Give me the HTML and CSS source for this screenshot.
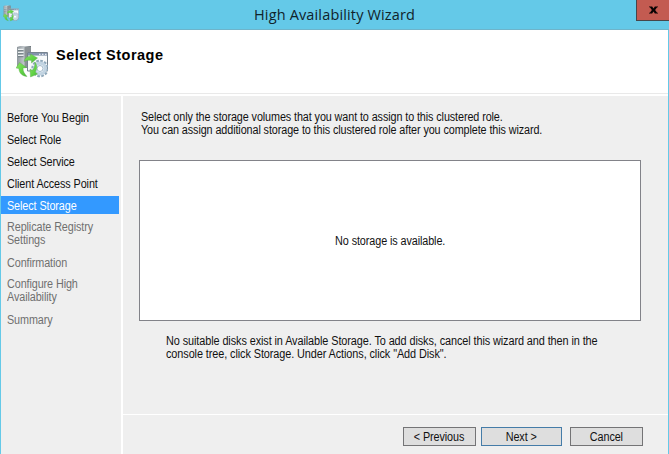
FILE: index.html
```
<!DOCTYPE html>
<html lang="en">
<head>
<meta charset="utf-8">
<title>High Availability Wizard</title>
<link rel="stylesheet" href="styles.css">
</head>
<body>
<div class="window">
  <header class="titlebar">
    <svg class="app-icon" viewBox="0 0 32 32"><use href="#cluster"/></svg>
    <h1><span>High Availability Wizard</span></h1>
    <button class="close" aria-label="Close"><svg viewBox="0 0 10 8"><path d="M0 0h3.500L5 2.300 6.500 0H10v1H9L6.800 4 9 7h1v1H6.500L5 5.700 3.500 8H0V7h1l2.200-3L1 1H0z"/></svg></button>
  </header>
  <section class="banner">
    <svg class="page-icon" viewBox="0 0 32 32">
      <defs>
        <linearGradient id="steel"><stop stop-color="#8f979d"/><stop offset=".55" stop-color="#c6ccd0"/><stop offset="1" stop-color="#687176"/></linearGradient>
        <linearGradient id="leaf" x2="1" y2="1"><stop stop-color="#8fe06a"/><stop offset=".5" stop-color="#66d648"/><stop offset="1" stop-color="#4cba3c"/></linearGradient>
        <g id="cluster">
          <path d="M1 1l3-1h11v22H1z" fill="url(#steel)"/>
          <path d="M8.500 1H15v21H8.500z" fill="#8b9296"/>
          <path d="M2 3.500h5.500M2 6.500h5.500M2 9.500h5.500" stroke="#edf1f2" stroke-width="1.300"/>
          <path d="M2 4.700h5.500M2 7.700h5.500M2 10.700h5.500" stroke="#56646c" stroke-width=".8"/>
          <path d="M11.500 6.500h20v18.500h-20z" fill="#f8fafb" stroke="#76838f"/>
          <path d="M12 7h19v2.600H12z" fill="#8293ab"/>
          <path d="M23 8.300h1.500M26 8.300h1.500M29 8.300h1.500" stroke="#fff"/>
          <circle cx="24" cy="22.500" r="7" fill="none" stroke="#8fa8ba" stroke-width="3.500" stroke-dasharray="2.400 1.265"/>
          <circle cx="24" cy="22.500" r="5.300" fill="#fafdff" stroke="#c2d4e2" stroke-width="3.200"/>
          <circle cx="24" cy="22.500" r="3" fill="#fff" stroke="#8ca7bc" stroke-width=".8"/>
          <path d="M8 15.500c1-4 3.500-5.500 6.500-5.300V8l7 4-6 5v-2.500c-3-.5-5.500-.2-7.500 1z" fill="url(#leaf)" stroke="#58a948" stroke-width=".4"/>
          <path d="M0 22l3.500-5.500 7 5-3.500.6c0 3.400 1.200 5.400 4 8.400-5-.5-7.800-3.500-8.200-8z" fill="url(#leaf)" stroke="#58a948" stroke-width=".4"/>
          <path d="M19 16c2.500 4 2.200 7 .2 10l2.300 2-7 3-.5-8 2.300 1.600c2-2.500 2.900-4.800 2.700-8.600z" fill="url(#leaf)" stroke="#58a948" stroke-width=".4"/>
        </g>
      </defs>
      <use href="#cluster"/>
    </svg>
    <h2>Select Storage</h2>
  </section>
  <div class="body">
    <nav>
      <a class="step"><span>Before You Begin</span></a>
      <a class="step"><span>Select Role</span></a>
      <a class="step"><span>Select Service</span></a>
      <a class="step"><span>Client Access Point</span></a>
      <a class="step current"><span>Select Storage</span></a>
      <a class="step pending two-line"><span>Replicate Registry<br>Settings</span></a>
      <a class="step pending"><span>Confirmation</span></a>
      <a class="step pending two-line"><span>Configure High<br>Availability</span></a>
      <a class="step pending"><span>Summary</span></a>
    </nav>
    <main>
      <section class="content">
        <p class="intro">Select only the storage volumes that you want to assign to this clustered role.<br>You can assign additional storage to this clustered role after you complete this wizard.</p>
        <div class="list"><span>No storage is available.</span></div>
        <p class="hint">No suitable disks exist in Available Storage. To add disks, cancel this wizard and then in the<br>console tree, click Storage. Under Actions, click "Add Disk".</p>
      </section>
      <footer>
        <button class="btn"><span>&lt; Previous</span></button>
        <button class="btn primary"><span>Next &gt;</span></button>
        <button class="btn"><span>Cancel</span></button>
      </footer>
    </main>
  </div>
</div>
</body>
</html>
```
FILE: styles.css
```
* { box-sizing: border-box; }
body { margin: 0; overflow: hidden; font: 12px/13px "Liberation Sans", Arial, sans-serif; letter-spacing: -0.1px; color: #111; }
h1, h2, p { margin: 0; }
.window { width: 669px; height: 454px; display: flex; flex-direction: column; background: #64c9e8; }
.titlebar { height: 30px; flex: none; display: flex; border-bottom: 1px solid #6eb4ca; }
.app-icon { width: 16px; height: 17px; margin: 5px 0 0 3px; }
h1 { flex: 1; padding-left: 235px; font: 14.5px/29px "Open Sans", "Noto Sans", sans-serif; letter-spacing: 0.15px; color: #10232b; }
.close { width: 33px; height: 21px; padding: 0; border: solid #47464a; border-width: 0 0 1px 1px; background: #c35b51; display: flex; }
.close svg { width: 9px; height: 8px; margin: 6px 0 0 12px; fill: #080303; }
.banner { height: 66px; flex: none; display: flex; margin: 0 1px; background: linear-gradient(#e9e9e9, #e9e9e9) 0 63px / 100% 1px no-repeat #fff; }
.page-icon { width: 32px; height: 32px; margin: 16px 0 0 15px; }
h2 { margin: 16px 0 0 8px; font: bold 14.5px/18px "Liberation Sans", Arial, sans-serif; letter-spacing: 0.48px; color: #000; }
.body { flex: 1; display: flex; margin: 0 1px; background: #efefef; }
nav { width: 122px; flex: none; border-right: 2px solid #fff; padding: 12px 2px 0 0; }
.step { display: block; height: 18px; margin-bottom: 4px; padding: 4px 0 0 6px; white-space: nowrap; }
/* Condensed dialog lettering */
.step span, .btn span, .list span { display: inline-block; transform: scaleX(0.9); }
.step span, .intro, .hint { transform-origin: 0 0; }
.intro { transform: scaleX(0.899); }
.hint { transform: scaleX(0.907); }
.current { background: #3399ff; color: #fff; }
.pending { color: #707070; }
.two-line { height: 31px; padding-top: 3px; }
main { flex: 1; min-width: 0; display: flex; flex-direction: column; }
.content { flex: 1; padding: 15px 27px 0 16px; white-space: nowrap; }
.intro { margin-left: 2px; }
.list { height: 161px; margin-top: 23px; padding-top: 2px; border: 1px solid #828389; background: #fff; display: flex; align-items: center; justify-content: center; }
.hint { margin: 14px 0 0 27px; }
footer { height: 40px; border-top: 1px solid #fff; display: flex; justify-content: flex-end; padding: 12px 25px 0 0; }
.btn { width: 73px; height: 19px; padding: 1px 0 0; border: 1px solid #747476; background: #dedede; font: inherit; letter-spacing: inherit; color: inherit; }
.primary { width: 81px; margin: 0 8px 0 5px; border-color: #457ca8; }
```
